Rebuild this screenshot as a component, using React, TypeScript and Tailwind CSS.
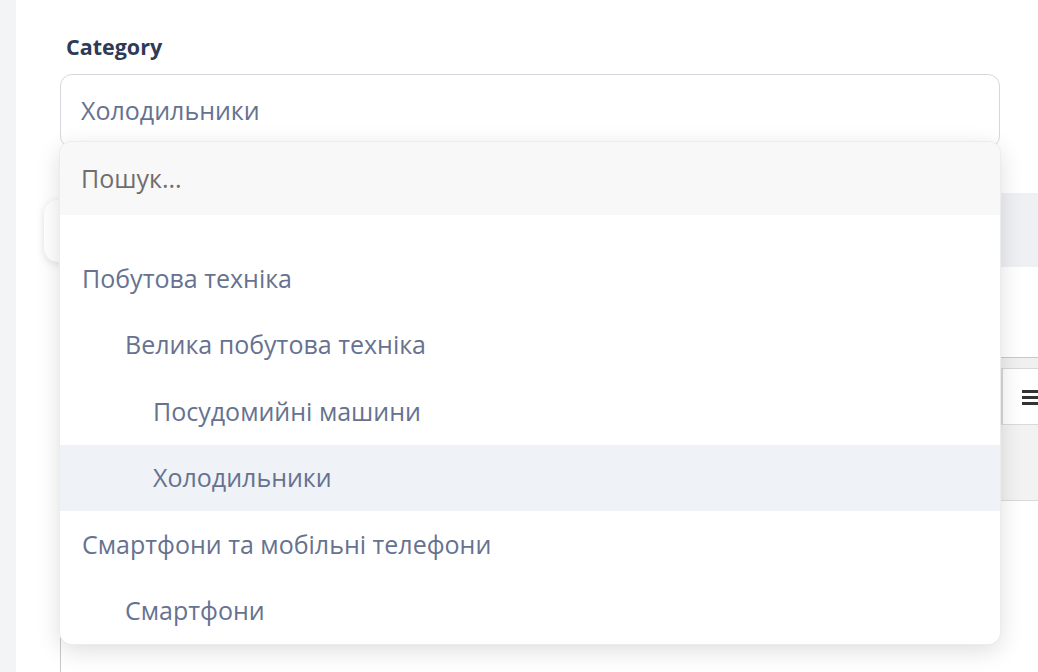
import React from "react";

const items: { label: string; level: number; active?: boolean }[] = [
  { label: "Побутова техніка", level: 0 },
  { label: "Велика побутова техніка", level: 1 },
  { label: "Посудомийні машини", level: 2 },
  { label: "Холодильники", level: 2, active: true },
  { label: "Смартфони та мобільні телефони", level: 0 },
  { label: "Смартфони", level: 1 },
];

const indent = ["pl-[22px]", "pl-[65px]", "pl-[93px]"];

export default function App() {
  return (
    <div
      className="flex h-[672px] w-full overflow-hidden bg-white"
      style={{ fontFamily: '"Open Sans", "Noto Sans", sans-serif' }}
    >
      <div className="w-4 shrink-0 bg-[#f3f4f6]" />
      <div className="relative flex-1 pl-[44px]">
        <div className="relative flex w-[1100px] flex-col">
          <div className="pl-[6px] pt-[33px] text-[21.5px] font-bold leading-[28px] text-[#2e3a56]">
            Category
          </div>
          <div className="mt-[13px] flex h-[74px] w-[940px] items-center rounded-[12px] border border-[#d6d8dd] bg-white pl-[20px] text-[25px] text-[#66728f]">
            Холодильники
          </div>

          {/* background tabs row */}
          <div className="mt-[45px] flex h-[74px] items-stretch">
            <div className="ml-[-16px] mt-[7px] h-[62px] w-[940px] rounded-[14px] bg-white shadow-[0_2px_8px_rgba(0,0,0,0.12)]" />
            <div className="h-[74px] flex-1 bg-[#eef0f4]" />
          </div>

          {/* background editor */}
          <div className="mt-[90px] flex flex-col border-l border-t border-[#c8c8c8]">
            <div className="h-[10px] bg-[#f0f0f0]" />
            <div className="flex h-[56px] border-t border-[#d8d8d8] bg-white">
              <div className="w-[940px]" />
              <div className="flex w-[60px] items-center justify-center border-l-2 border-[#d8d8d8]">
                <svg width="20" height="16" viewBox="0 0 20 16">
                  <rect x="0" y="1" width="20" height="3" fill="#333" />
                  <rect x="0" y="7" width="20" height="3" fill="#333" />
                  <rect x="0" y="13" width="20" height="3" fill="#333" />
                </svg>
              </div>
            </div>
            <div className="h-[77px] border-b border-t border-[#dadada] bg-[#f2f2f2]" />
            <div className="h-[200px] bg-white" />
          </div>

          {/* dropdown */}
          <div className="absolute left-0 top-[142px] w-[940px] overflow-hidden rounded-[12px] bg-white shadow-[0_6px_24px_rgba(0,0,0,0.14)] ring-1 ring-[#ececec]">
            <div className="flex h-[73px] items-center bg-[#f8f8f8] pl-[21px] text-[25px] text-[#6e6e6e]">
              Пошук...
            </div>
            <div className="pt-[30px]">
              {items.map((it) => (
                <div
                  key={it.label + it.level}
                  className={`flex h-[66.5px] items-center text-[25px] text-[#66728f] ${indent[it.level]} ${
                    it.active ? "bg-[#eff3f8]" : ""
                  }`}
                >
                  {it.label}
                </div>
              ))}
            </div>
          </div>
        </div>
      </div>
    </div>
  );
}
